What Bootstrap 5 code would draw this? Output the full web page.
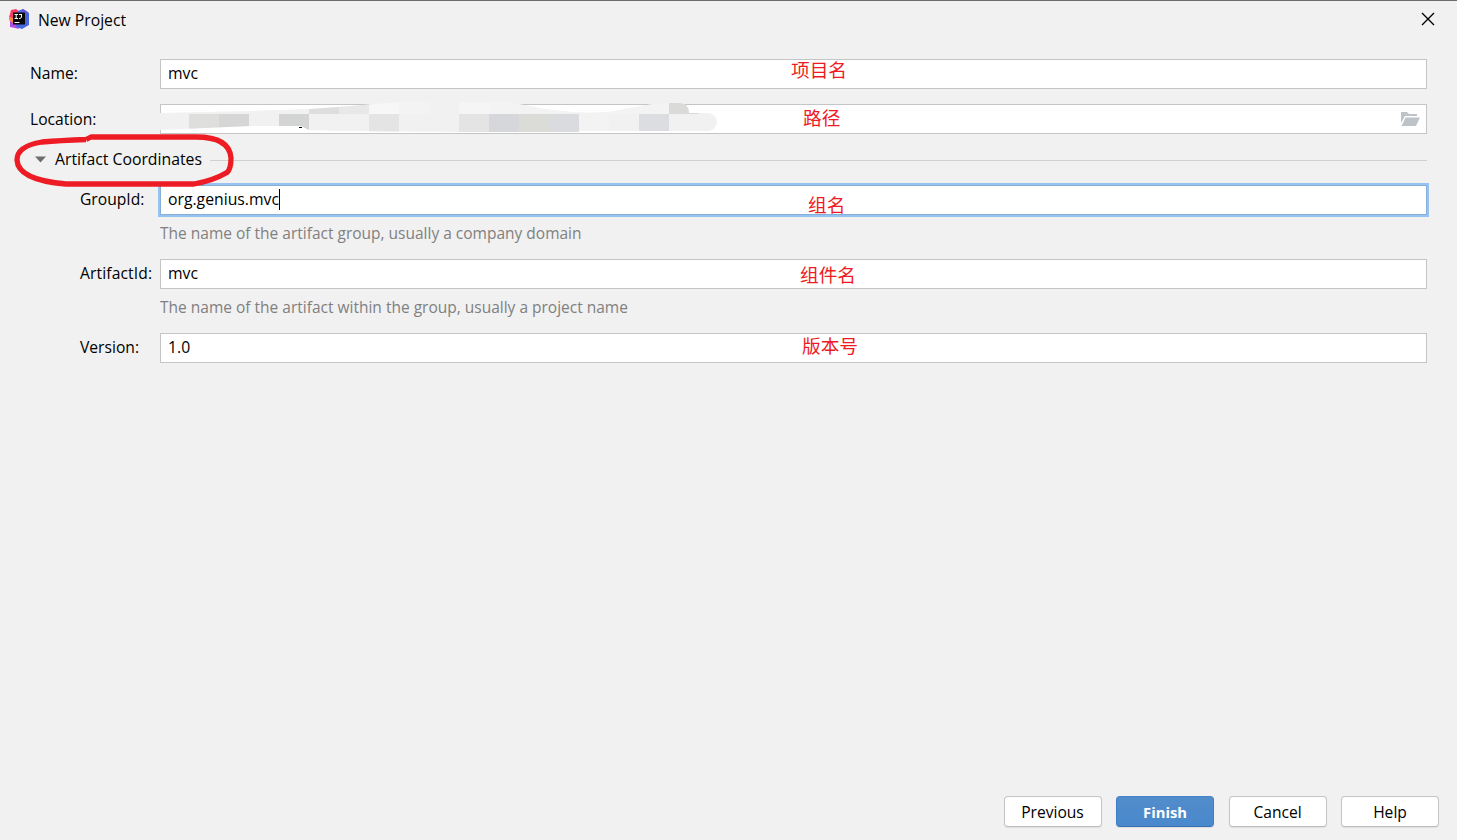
<!DOCTYPE html>
<html lang="en">
<head>
<meta charset="utf-8">
<title>New Project</title>
<link href="https://cdn.jsdelivr.net/npm/bootstrap@5.3.0/dist/css/bootstrap.min.css" rel="stylesheet">
<style>
body{background:#f1f1f1;color:#000;font:16px/20px "Open Sans","Noto Sans CJK SC",sans-serif;overflow:hidden}
.dialog-window{height:840px;border-top:1px solid #6f6c70}
.title-bar{height:36px;padding:0 22px 0 8px}
.title-text{margin:1px 0 0 8px;font-size:15.7px}
.form-area{padding:22px 30px 0 30px}
.field-row{height:30px}
.field-label{width:130px;flex:none;font-size:15.65px;margin-top:-2px}
.location-label{margin-top:0}
.sub-label{padding-left:50px}
.id-label{letter-spacing:.12px}
.field-box{height:30px;border:1px solid #c5c5c5;border-radius:0;background:#fff;padding:0 7px;color:#000;font-size:15.75px;line-height:26px;box-shadow:none}
.field-box.focused{border-color:#87afda;outline:2px solid #97c3f3}
.caret{display:inline-block;width:1px;height:21px;background:#000;vertical-align:middle;margin:-2px 0 0 0}
.hint{height:44px;margin-left:130px;padding-top:8px;color:#808080;font-size:15.5px}
.section-head{height:51px;padding:0 0 0 5px;margin:0}
.section-title{margin:-2px 0 0 9px;font-size:15.8px}
.section-head .rule{height:1px;background:#d0d0d0;margin:2px 0 0 8px}
.note{position:absolute;color:#ed1c24;font:18.7px/24px "Noto Sans CJK SC",sans-serif;font-weight:400;white-space:nowrap}
.n1{left:630px;top:-3px}.n2{left:642px;top:0}.n3{left:647px;top:6px}.n4{left:639px;top:2px}.n5{left:641px;top:-1px}
.mosaic{position:absolute;left:-2px;top:-4px}
.folder{position:absolute;right:6px;top:6px}
.marker{position:absolute;left:10px;top:130px;pointer-events:none}
.actions{padding:0 18px 13px;gap:14.5px}
.dlg-btn{width:98px;height:31px;padding:1px 0 0;border:1px solid #c5c5c5;border-bottom-color:#bdbdbd;border-radius:4px;background:#fff;color:#000;font-size:15.6px;line-height:29px;box-shadow:0 1px 1px #dedede}
.dlg-btn.default{background:linear-gradient(#528ccb,#4989cc);border-color:#4382c6 #3d7ec4 #366fb2;color:#fff;font-weight:700;font-size:14.8px}
</style>
</head>
<body>
<div class="dialog-window position-relative d-flex flex-column">
  <header class="title-bar d-flex align-items-center">
    <svg width="22" height="22" viewBox="0 0 22 22" aria-hidden="true">
      <path d="M3 2l5-1 4 3-4 8-7-3 1-3z" fill="#fb3a65"/><path d="M2 12l5-1 4 10-4-1-5-1z" fill="#b64ae0"/><path d="M1 9l5 2-1 4-4-3z" fill="#fc8436"/>
      <path d="M10 3l5-2 6 4v12l-7 4-6-2z" fill="#4666e0"/><path d="M12 3l3-2 5 3-2 2z" fill="#6657de"/>
      <path d="M5 4.500h12v12H5z" fill="#080808"/><path d="M6.500 6.500H10M8.200 6.500v4M6.500 10.500H10M11 6.500h3M13.500 6.500V9q0 1.500-2.500 1.500M6.500 14.500h5" fill="none" stroke="#fff" stroke-width="1"/>
    </svg>
    <span class="title-text">New Project</span>
    <svg class="ms-auto" width="14" height="14" viewBox="0 0 14 14"><path d="M1 1l12 12M13 1L1 13" stroke="#000" stroke-width="1.4"/></svg>
  </header>
  <main class="form-area flex-grow-1">
    <div class="field-row d-flex align-items-center">
      <label class="field-label">Name:</label>
      <div class="field-box form-control position-relative">mvc<span class="note n1">项目名</span></div>
    </div>
    <div class="field-row d-flex align-items-center" style="margin-top:15px">
      <label class="field-label location-label">Location:</label>
      <div class="field-box form-control position-relative">
        <svg class="mosaic" width="562" height="34" viewBox="159 101 562 34">
          <defs><clipPath id="smear"><path d="M159 113L250 111 310 109 345 106.500 369 104.500 400 102H505L530 106Q545 110 560 111Q600 115 620 110Q655 103 665 103H680Q689 104 689 113H708A9 9 0 0 1 708 131H579V132H460L340 131 309 130 301 126H250L159 130z"/></clipPath></defs>
          <g clip-path="url(#smear)">
            <path fill="#f1f1f1" d="M159 101h562v34H159z"/>
            <path fill="#dededd" d="M189 114h30v21h-30z"/><path fill="#d6d6d6" d="M219 114h30v21h-30z"/><path fill="#d3d5d5" d="M279 114h30v21h-30z"/>
            <path fill="#dedede" d="M309 101h30v13h-30z"/><path fill="#e8e8e8" d="M339 101h30v13h-30z"/><path fill="#f7f7f7" d="M369 101h30v13h-30z"/><path fill="#f5f5f5" d="M459 101h30v13h-30z"/>
            <path fill="#e4e4e4" d="M369 114h30v21h-30zM459 114h30v21h-30z"/><path fill="#d5d7da" d="M489 114h30v21h-30z"/><path fill="#dbdbd8" d="M519 114h30v21h-30z"/><path fill="#d9dbde" d="M549 114h30v21h-30z"/>
            <path fill="#f3f3f3" d="M579 114h30v21h-30zM399 101h30v13h-30zM489 101h180v13H489z"/><path fill="#dcdde0" d="M639 114h30v21h-30z"/><path fill="#dadad9" d="M669 101h30v13h-30z"/>
          </g><path d="M299 127.500h3" stroke="#000"/>
        </svg>
        <span class="note n2">路径</span>
        <svg class="folder" width="20" height="16" viewBox="0 0 20 16"><path fill="#bdc3c8" d="M1 1h6l2 2h8v2H5L1 12zM5.500 6.500H20L16 15H1.500z"/></svg>
      </div>
    </div>
    <div class="section-head d-flex align-items-center">
      <svg width="11" height="8" viewBox="0 0 11 8"><path fill="#6e6e6e" d="M0 .5h11L5.500 6.500z"/></svg>
      <span class="section-title">Artifact Coordinates</span><span class="rule flex-grow-1"></span>
    </div>
    <div class="field-row d-flex align-items-center">
      <label class="field-label sub-label">GroupId:</label>
      <div class="field-box focused form-control position-relative">org.genius.mvc<span class="caret"></span><span class="note n3">组名</span></div>
    </div>
    <div class="hint"><span>The name of the artifact group, usually a company domain</span></div>
    <div class="field-row d-flex align-items-center">
      <label class="field-label sub-label id-label">ArtifactId:</label>
      <div class="field-box form-control position-relative">mvc<span class="note n4">组件名</span></div>
    </div>
    <div class="hint"><span>The name of the artifact within the group, usually a project name</span></div>
    <div class="field-row d-flex align-items-center">
      <label class="field-label sub-label">Version:</label>
      <div class="field-box form-control position-relative">1.0<span class="note n5">版本号</span></div>
    </div>
  </main>
  <footer class="actions d-flex justify-content-end">
    <button class="btn dlg-btn">Previous</button><button class="btn dlg-btn default">Finish</button><button class="btn dlg-btn">Cancel</button><button class="btn dlg-btn">Help</button>
  </footer>
  <svg class="marker" width="230" height="60" viewBox="10 131 230 60"><path d="M86 139.500Q60 140.500 42 142Q17 146 17 160Q18 180 66 184H194C211 181 221 176 227 172.500Q231 169 231 158C230 143 217 137 196 137H91L86 139.500" fill="none" stroke="#ed1c24" stroke-width="5.300" stroke-linejoin="round"/></svg>
</div>
<script src="https://cdn.jsdelivr.net/npm/bootstrap@5.3.0/dist/js/bootstrap.bundle.min.js"></script>
</body>
</html>
